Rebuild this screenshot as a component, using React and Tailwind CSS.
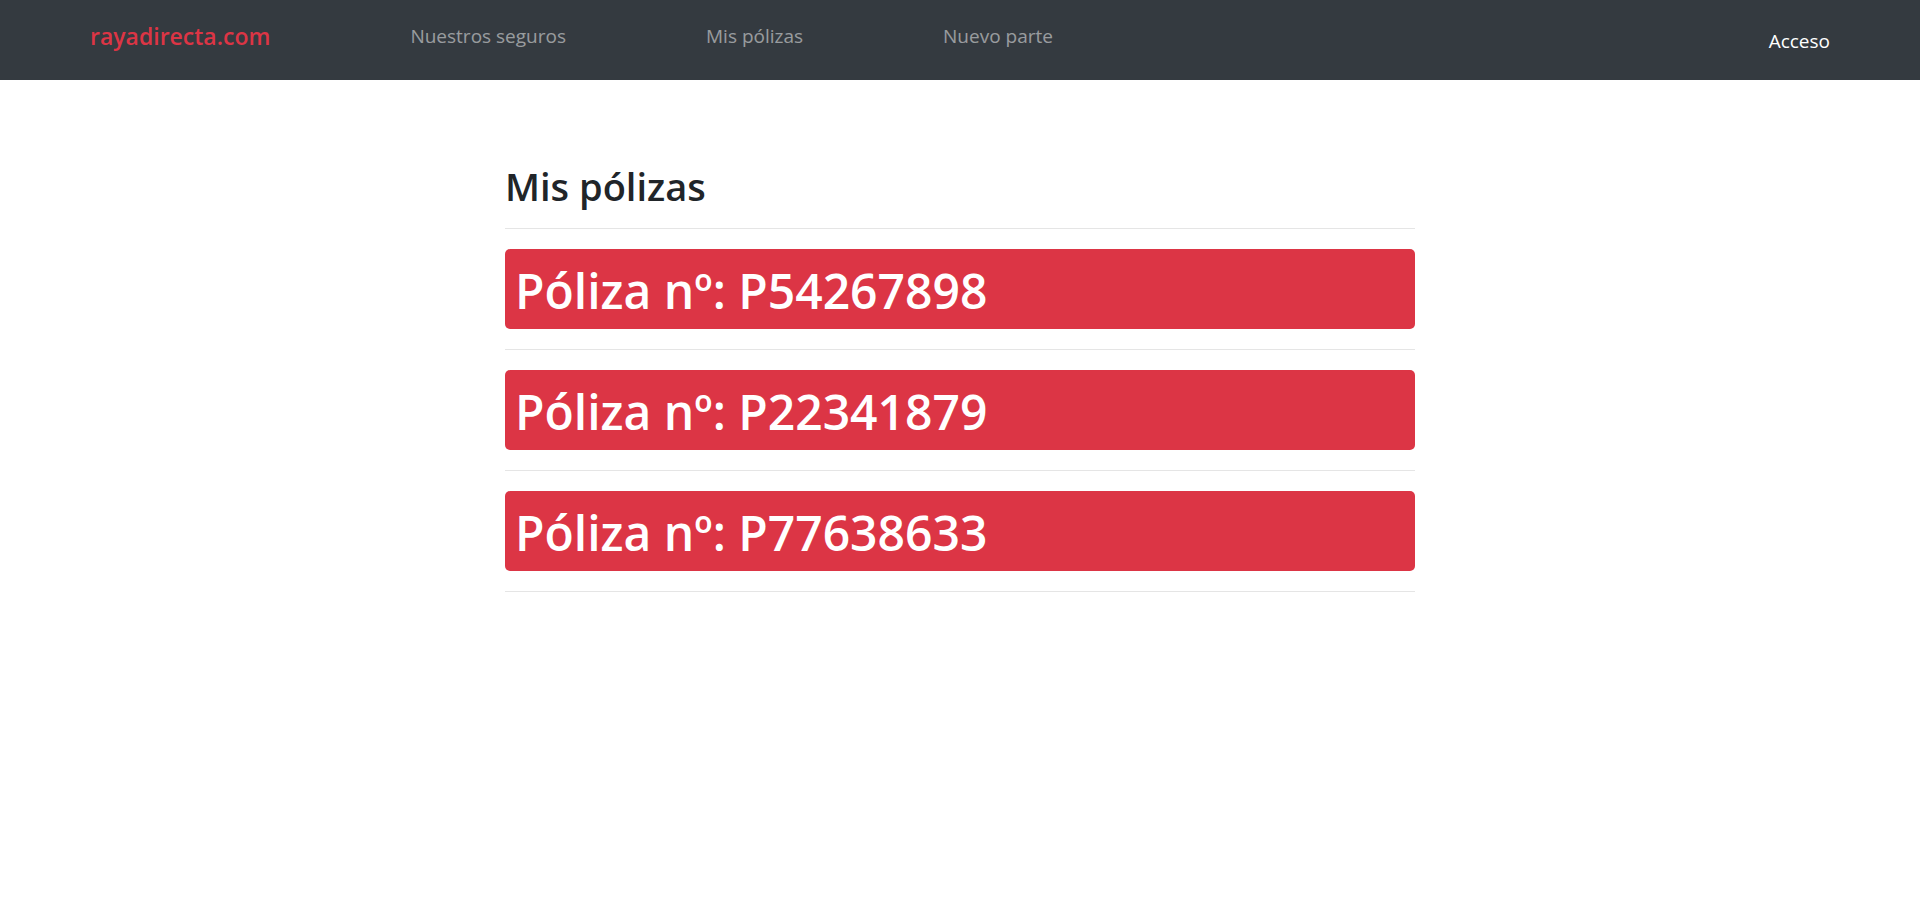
const links = ["Nuestros seguros", "Mis pólizas", "Nuevo parte"];
const policies = ["P54267898", "P22341879", "P77638633"];

function Navbar() {
  return (
    <header className="flex h-20 items-start bg-[#343a40] px-[90px]">
      <a href="#" className="mt-[18px] text-[23px] leading-9 font-semibold text-[#dc3545]">
        rayadirecta.com
      </a>
      <nav className="mt-[18px] ml-[140px] flex gap-[140px]">
        {links.map((label) => (
          <a key={label} href="#" className="text-[19px] leading-9 text-white/50 hover:text-white/75">
            {label}
          </a>
        ))}
      </nav>
      <button type="button" className="mt-[23px] ml-auto text-[19px] leading-9 text-white">
        Acceso
      </button>
    </header>
  );
}

export default function App() {
  return (
    <div className="bg-white font-['Open_Sans','Noto_Sans',sans-serif] text-[#212529]">
      <Navbar />
      <main className="mx-auto max-w-[910px] pt-[82px]">
        <h1 className="text-[38px] leading-[48px] font-semibold">Mis pólizas</h1>
        <hr className="mt-[18px] mb-5 border-black/10" />
        {policies.map((number) => (
          <section key={number}>
            <h2 className="rounded-[5px] bg-[#dc3545] px-2.5 pt-1.5 pb-0.5 text-[48px] leading-[72px] font-semibold text-white">
              Póliza nº: {number}
            </h2>
            <hr className="my-5 border-black/10" />
          </section>
        ))}
      </main>
    </div>
  );
}
